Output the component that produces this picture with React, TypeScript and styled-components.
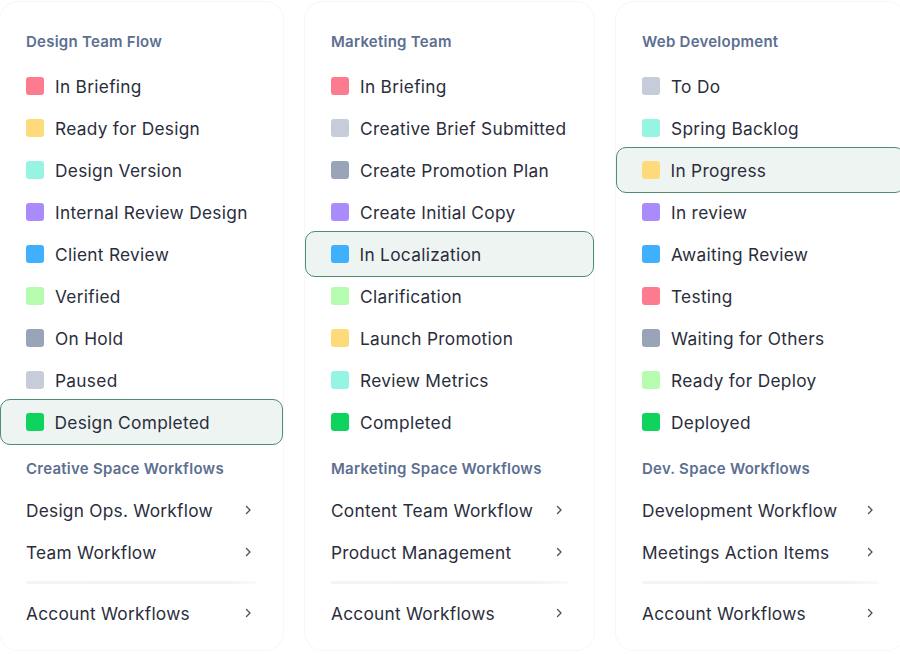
import React from "react";
import styled, { createGlobalStyle } from "styled-components";

const Global = createGlobalStyle`
  html, body { margin: 0; padding: 0; background: #ffffff; overflow: hidden; }
  body { font-family: Inter, "Noto Sans", sans-serif; -webkit-font-smoothing: antialiased; }
  * { box-sizing: border-box; }
`;

const Board = styled.div`
  display: grid;
  grid-template-columns: 283px 289px 289px;
  column-gap: 22px;
  width: 905px;
  height: 654px;
  padding-top: 2px;
`;

const Card = styled.section`
  background: #fff;
  box-shadow: 0 0 0 1px #f7f7f8;
  border-radius: 18px;
  height: 648px;
  display: flex;
  flex-direction: column;
  padding-top: 30px;
`;

const Heading = styled.h3`
  margin: 0;
  padding: 0 26px;
  font-size: 15px;
  font-weight: 600;
  color: #5c6f91;
  letter-spacing: 0.25px;
  line-height: 20px;
  height: 20px;
  white-space: nowrap;
`;

const StatusList = styled.ul`
  list-style: none;
  margin: 13px 0 0;
  padding: 0;
  display: flex;
  flex-direction: column;
`;

const Row = styled.li<{ $active?: boolean }>`
  display: flex;
  align-items: center;
  gap: 11px;
  height: ${(p) => (p.$active ? "46px" : "42px")};
  margin: ${(p) => (p.$active ? "-2px 0" : "0")};
  padding: 0 ${(p) => (p.$active ? "24.5px" : "26px")};
  border: ${(p) => (p.$active ? "1.5px solid #4f8e6d" : "none")};
  border-radius: 10px;
  background: ${(p) => (p.$active ? "#eef4f1" : "transparent")};
  font-size: 17.3px;
  color: #2a2d3c;
  letter-spacing: 0.3px;
  white-space: nowrap;
  position: relative;
  z-index: ${(p) => (p.$active ? 1 : 0)};
`;

const Swatch = styled.span<{ $color: string }>`
  width: 18px;
  height: 18px;
  border-radius: 3px;
  background: ${(p) => p.$color};
  flex: none;
`;

const SubHeading = styled(Heading)`
  margin-top: 16px;
`;

const LinkList = styled.div`
  display: flex;
  flex-direction: column;
  margin-top: 10px;
  padding: 0 30px 0 26px;
`;

const LinkRow = styled.div`
  display: flex;
  align-items: center;
  justify-content: space-between;
  height: 42px;
  font-size: 17.3px;
  color: #2a2d3c;
  letter-spacing: 0.25px;
  white-space: nowrap;
`;

const Divider = styled.hr`
  border: none;
  height: 3px;
  margin: 8px -4px 8px 0;
  background: linear-gradient(90deg, #f3f4f6, #f1f2f4 85%, #fafafa);
  border-radius: 2px;
`;

const Chevron = () => (
  <svg width="10" height="12" viewBox="0 0 10 12">
    <path d="M3.5 2.5 L7 6 L3.5 9.5" fill="none" stroke="#4b4f5e" strokeWidth="1.3" strokeLinecap="round" strokeLinejoin="round" />
  </svg>
);

const C = {
  pink: "#fd7b8e",
  yellow: "#fedb7a",
  cyan: "#96f4e3",
  purple: "#a98bfb",
  blue: "#3eb0fd",
  lime: "#b5fcae",
  gray: "#9aa4b8",
  light: "#c6ccd9",
  green: "#0ed35d",
};

type Col = {
  title: string;
  statuses: [string, string][];
  active: number;
  space: string;
  links: string[];
};

const cols: Col[] = [
  {
    title: "Design Team Flow",
    statuses: [
      ["In Briefing", C.pink],
      ["Ready for Design", C.yellow],
      ["Design Version", C.cyan],
      ["Internal Review Design", C.purple],
      ["Client Review", C.blue],
      ["Verified", C.lime],
      ["On Hold", C.gray],
      ["Paused", C.light],
      ["Design Completed", C.green],
    ],
    active: 8,
    space: "Creative Space Workflows",
    links: ["Design Ops. Workflow", "Team Workflow"],
  },
  {
    title: "Marketing Team",
    statuses: [
      ["In Briefing", C.pink],
      ["Creative Brief Submitted", C.light],
      ["Create Promotion Plan", C.gray],
      ["Create Initial Copy", C.purple],
      ["In Localization", C.blue],
      ["Clarification", C.lime],
      ["Launch Promotion", C.yellow],
      ["Review Metrics", C.cyan],
      ["Completed", C.green],
    ],
    active: 4,
    space: "Marketing Space Workflows",
    links: ["Content Team Workflow", "Product Management"],
  },
  {
    title: "Web Development",
    statuses: [
      ["To Do", C.light],
      ["Spring Backlog", C.cyan],
      ["In Progress", C.yellow],
      ["In review", C.purple],
      ["Awaiting Review", C.blue],
      ["Testing", C.pink],
      ["Waiting for Others", C.gray],
      ["Ready for Deploy", C.lime],
      ["Deployed", C.green],
    ],
    active: 2,
    space: "Dev. Space Workflows",
    links: ["Development Workflow", "Meetings Action Items"],
  },
];

export default function App() {
  return (
    <>
      <Global />
      <Board>
        {cols.map((col) => (
          <Card key={col.title}>
            <Heading>{col.title}</Heading>
            <StatusList>
              {col.statuses.map(([name, color], i) => (
                <Row key={name} $active={i === col.active}>
                  <Swatch $color={color} />
                  {name}
                </Row>
              ))}
            </StatusList>
            <SubHeading>{col.space}</SubHeading>
            <LinkList>
              {col.links.map((l) => (
                <LinkRow key={l}>
                  {l}
                  <Chevron />
                </LinkRow>
              ))}
              <Divider />
              <LinkRow>
                Account Workflows
                <Chevron />
              </LinkRow>
            </LinkList>
          </Card>
        ))}
      </Board>
    </>
  );
}
